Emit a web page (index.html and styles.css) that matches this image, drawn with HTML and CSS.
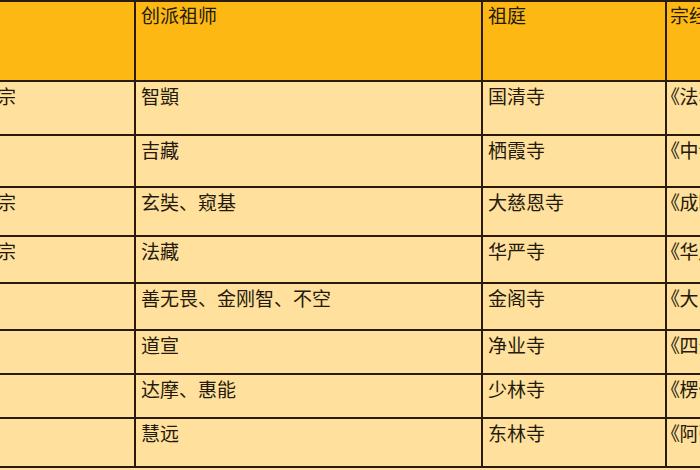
FILE: index.html
```html
<!DOCTYPE html>
<html lang="zh">
<head>
<meta charset="utf-8">
<link rel="stylesheet" href="styles.css">
</head>
<body>
<div class="table">
  <div class="cell head c1">宗派</div>
  <div class="cell head">创派祖师</div>
  <div class="cell head">祖庭</div>
  <div class="cell head last">宗经</div>

  <div class="cell c1">天台宗</div>
  <div class="cell">智顗</div>
  <div class="cell">国清寺</div>
  <div class="cell last">《法华经》</div>

  <div class="cell c1">三论</div>
  <div class="cell">吉藏</div>
  <div class="cell">栖霞寺</div>
  <div class="cell last">《中论》</div>

  <div class="cell c1">唯识宗</div>
  <div class="cell">玄奘、窥基</div>
  <div class="cell">大慈恩寺</div>
  <div class="cell last">《成唯识论》</div>

  <div class="cell c1">华严宗</div>
  <div class="cell">法藏</div>
  <div class="cell">华严寺</div>
  <div class="cell last">《华严经》</div>

  <div class="cell c1">密宗</div>
  <div class="cell">善无畏、金刚智、不空</div>
  <div class="cell">金阁寺</div>
  <div class="cell last">《大日经》</div>

  <div class="cell c1">律宗</div>
  <div class="cell">道宣</div>
  <div class="cell">净业寺</div>
  <div class="cell last">《四分律》</div>

  <div class="cell c1">禅宗</div>
  <div class="cell">达摩、惠能</div>
  <div class="cell">少林寺</div>
  <div class="cell last">《楞伽经》</div>

  <div class="cell c1">莲宗</div>
  <div class="cell">慧远</div>
  <div class="cell">东林寺</div>
  <div class="cell last">《阿弥陀经》</div>
</div>
</body>
</html>
```
FILE: styles.css
```css
html, body {
  margin: 0;
  padding: 0;
  overflow: hidden;
  width: 700px;
  height: 470px;
  background: #ffe09c;
}

.table {
  display: grid;
  grid-template-columns: 177px 347px 184px 200px;
  grid-template-rows: 80px 54px 52px 49px 47px 47px 44px 44px 49px;
  margin-left: -41px;
  width: 908px;
  border-top: 2px solid #2a1b0c;
  background: #ffe09c;
  font-family: "Noto Sans CJK SC", "Noto Sans", sans-serif;
  font-size: 19px;
  line-height: 22px;
  color: #241a0b;
}

.cell {
  box-sizing: border-box;
  border-right: 2px solid #2a1b0c;
  border-bottom: 2px solid #2a1b0c;
  padding: 3px 0 0 5px;
  white-space: nowrap;
  overflow: hidden;
}

.c1 {
  padding-left: 0;
}

.head {
  background: #fdb813;
  padding-top: 2px;
}

.last {
  padding-left: 3px;
  font-feature-settings: "palt";
}
```
